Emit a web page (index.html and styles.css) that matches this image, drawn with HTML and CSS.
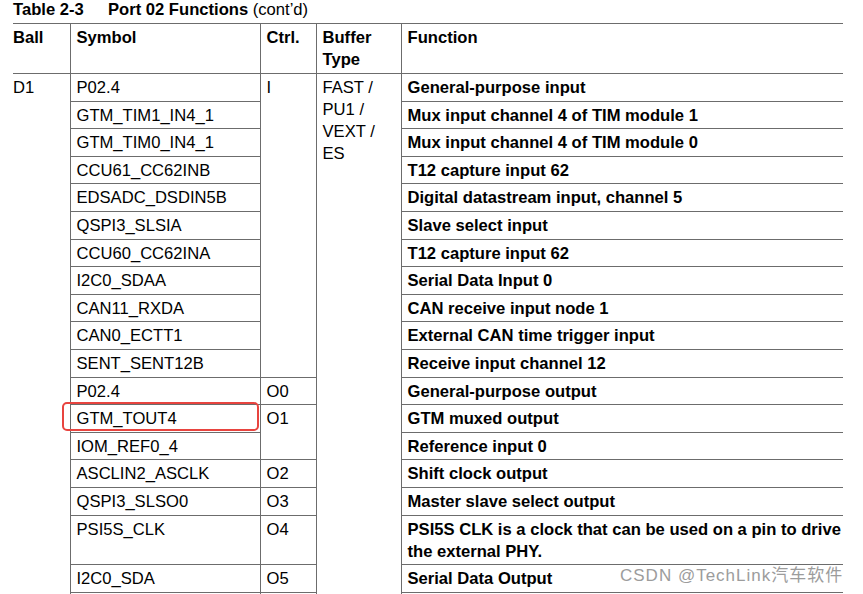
FILE: index.html
```html
<!DOCTYPE html>
<html>
<head>
<meta charset="utf-8">
<link rel="stylesheet" href="styles.css">
</head>
<body>
<div class="page">
  <h1 class="title"><span class="num">Table 2-3</span><span class="name">Port 02 Functions</span> <span class="cont">(cont’d)</span></h1>
  <table class="ports">
    <colgroup>
      <col class="c-ball"><col class="c-sym"><col class="c-ctrl"><col class="c-buf"><col class="c-fn">
    </colgroup>
    <thead>
      <tr class="head">
        <th class="ball">Ball</th>
        <th>Symbol</th>
        <th>Ctrl.</th>
        <th>Buffer<br>Type</th>
        <th class="fn">Function</th>
      </tr>
    </thead>
    <tbody>
      <tr>
        <td class="ball" rowspan="19">D1</td>
        <td>P02.4</td>
        <td rowspan="11">I</td>
        <td rowspan="19">FAST /<br>PU1 /<br>VEXT /<br>ES</td>
        <td class="fn">General-purpose input</td>
      </tr>
      <tr><td>GTM_TIM1_IN4_1</td><td class="fn">Mux input channel 4 of TIM module 1</td></tr>
      <tr><td>GTM_TIM0_IN4_1</td><td class="fn">Mux input channel 4 of TIM module 0</td></tr>
      <tr><td>CCU61_CC62INB</td><td class="fn">T12 capture input 62</td></tr>
      <tr><td>EDSADC_DSDIN5B</td><td class="fn">Digital datastream input, channel 5</td></tr>
      <tr><td>QSPI3_SLSIA</td><td class="fn">Slave select input</td></tr>
      <tr><td>CCU60_CC62INA</td><td class="fn">T12 capture input 62</td></tr>
      <tr><td>I2C0_SDAA</td><td class="fn">Serial Data Input 0</td></tr>
      <tr><td>CAN11_RXDA</td><td class="fn">CAN receive input node 1</td></tr>
      <tr><td>CAN0_ECTT1</td><td class="fn">External CAN time trigger input</td></tr>
      <tr><td>SENT_SENT12B</td><td class="fn">Receive input channel 12</td></tr>
      <tr><td>P02.4</td><td>O0</td><td class="fn">General-purpose output</td></tr>
      <tr><td class="marked">GTM_TOUT4<span class="highlight"></span></td><td rowspan="2">O1</td><td class="fn">GTM muxed output</td></tr>
      <tr><td>IOM_REF0_4</td><td class="fn">Reference input 0</td></tr>
      <tr><td>ASCLIN2_ASCLK</td><td>O2</td><td class="fn">Shift clock output</td></tr>
      <tr><td>QSPI3_SLSO0</td><td>O3</td><td class="fn">Master slave select output</td></tr>
      <tr><td>PSI5S_CLK</td><td>O4</td><td class="fn">PSI5S CLK is a clock that can be used on a pin to drive<br>the external PHY.</td></tr>
      <tr><td>I2C0_SDA</td><td>O5</td><td class="fn">Serial Data Output</td></tr>
      <tr class="tail"><td></td><td></td><td class="fn"></td></tr>
    </tbody>
  </table>
</div>
<div class="watermark">CSDN @TechLink汽车软件</div>
</body>
</html>
```
FILE: styles.css
```css
html, body {
  margin: 0;
  padding: 0;
  background: #ffffff;
  overflow: hidden;
}

.page {
  padding-left: 13px;
  font-family: "Liberation Sans", Arial, sans-serif;
  color: #000;
}

.title {
  margin: 0;
  padding-top: 1px;
  height: 22px;
  font-size: 16.6px;
  line-height: 18px;
  font-weight: bold;
  white-space: nowrap;
}

.title .num {
  display: inline-block;
  width: 95px;
}

.title .cont {
  font-weight: normal;
}

.ports {
  border-collapse: collapse;
  table-layout: fixed;
  width: 830px;
  font-size: 16.6px;
  line-height: 22px;
}

.c-ball { width: 57px; }
.c-sym { width: 190px; }
.c-ctrl { width: 56px; }
.c-buf { width: 85px; }
.c-fn { width: 442px; }

.ports th,
.ports td {
  border: 1px solid #6c6c6c;
  padding: 3px 6px 1.6px 6px;
  vertical-align: top;
  text-align: left;
  white-space: nowrap;
}

.ports th {
  font-weight: bold;
  padding-bottom: 2px;
}

.ports .tail td {
  height: 22px;
}

.ports .ball {
  border-left: none;
  padding-left: 0;
}

.ports .fn {
  border-right: none;
  font-weight: bold;
}

.ports .marked {
  position: relative;
}

.highlight {
  position: absolute;
  left: -9px;
  top: -3px;
  right: 1px;
  bottom: 1px;
  border: 2px solid #e8443f;
  border-radius: 5px;
}

.watermark {
  position: absolute;
  left: 620px;
  top: 566px;
  font-family: "Liberation Sans", Arial, "Noto Sans CJK SC", sans-serif;
  font-size: 17px;
  letter-spacing: 1px;
  line-height: 20px;
  color: #9c9c9c;
  white-space: nowrap;
  text-shadow: 0 0 2px #fff, 0 0 2px #fff;
}
```
